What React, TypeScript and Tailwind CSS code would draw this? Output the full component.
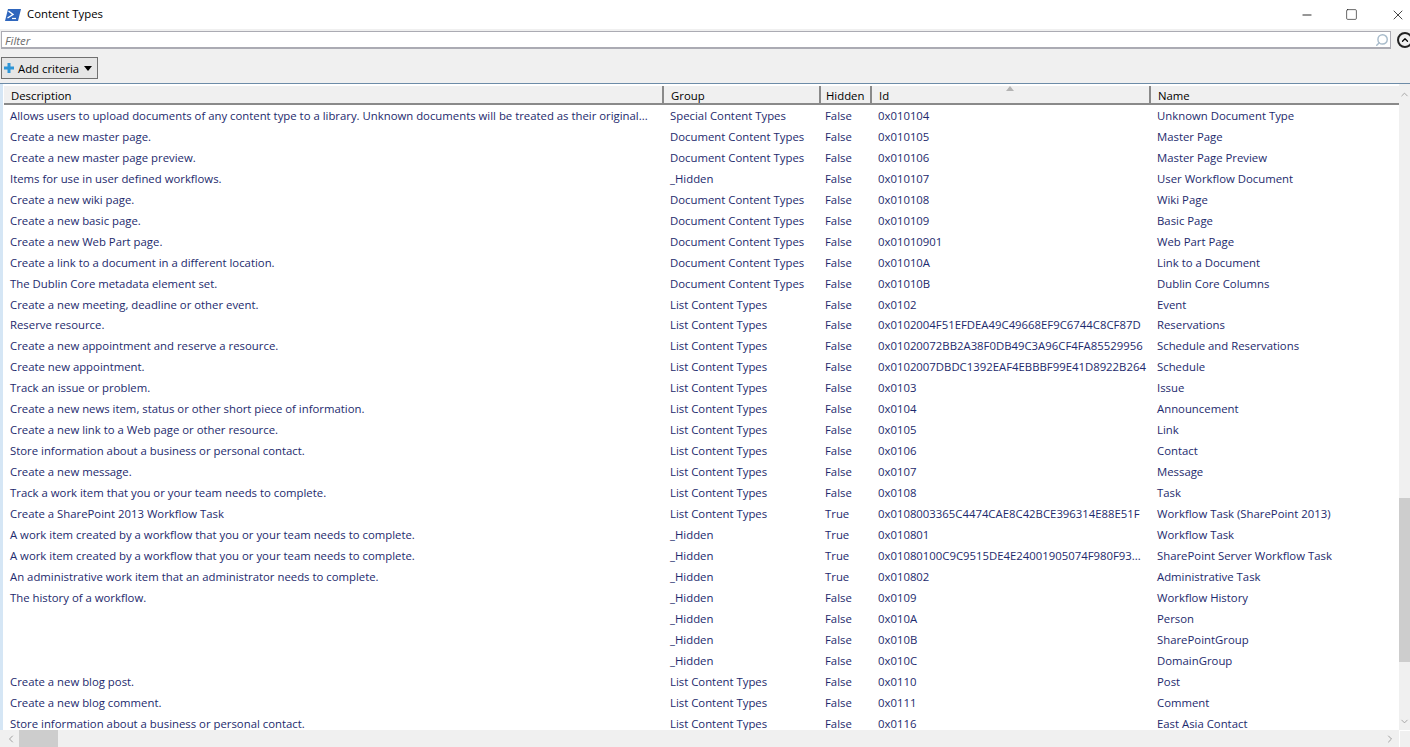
import { ChevronDown, ChevronLeft, ChevronRight, ChevronUp, Minus, Search, Square, X } from 'lucide-react';

type Row = [string, string, string, string, string];

const DOC = 'Document Content Types';
const LIST = 'List Content Types';
const HID = '_Hidden';

const ROWS: Row[] = [
  ['Allows users to upload documents of any content type to a library. Unknown documents will be treated as their original...', 'Special Content Types', 'False', '0x010104', 'Unknown Document Type'],
  ['Create a new master page.', DOC, 'False', '0x010105', 'Master Page'],
  ['Create a new master page preview.', DOC, 'False', '0x010106', 'Master Page Preview'],
  ['Items for use in user defined workflows.', HID, 'False', '0x010107', 'User Workflow Document'],
  ['Create a new wiki page.', DOC, 'False', '0x010108', 'Wiki Page'],
  ['Create a new basic page.', DOC, 'False', '0x010109', 'Basic Page'],
  ['Create a new Web Part page.', DOC, 'False', '0x01010901', 'Web Part Page'],
  ['Create a link to a document in a different location.', DOC, 'False', '0x01010A', 'Link to a Document'],
  ['The Dublin Core metadata element set.', DOC, 'False', '0x01010B', 'Dublin Core Columns'],
  ['Create a new meeting, deadline or other event.', LIST, 'False', '0x0102', 'Event'],
  ['Reserve resource.', LIST, 'False', '0x0102004F51EFDEA49C49668EF9C6744C8CF87D', 'Reservations'],
  ['Create a new appointment and reserve a resource.', LIST, 'False', '0x01020072BB2A38F0DB49C3A96CF4FA85529956', 'Schedule and Reservations'],
  ['Create new appointment.', LIST, 'False', '0x0102007DBDC1392EAF4EBBBF99E41D8922B264', 'Schedule'],
  ['Track an issue or problem.', LIST, 'False', '0x0103', 'Issue'],
  ['Create a new news item, status or other short piece of information.', LIST, 'False', '0x0104', 'Announcement'],
  ['Create a new link to a Web page or other resource.', LIST, 'False', '0x0105', 'Link'],
  ['Store information about a business or personal contact.', LIST, 'False', '0x0106', 'Contact'],
  ['Create a new message.', LIST, 'False', '0x0107', 'Message'],
  ['Track a work item that you or your team needs to complete.', LIST, 'False', '0x0108', 'Task'],
  ['Create a SharePoint 2013 Workflow Task', LIST, 'True', '0x0108003365C4474CAE8C42BCE396314E88E51F', 'Workflow Task (SharePoint 2013)'],
  ['A work item created by a workflow that you or your team needs to complete.', HID, 'True', '0x010801', 'Workflow Task'],
  ['A work item created by a workflow that you or your team needs to complete.', HID, 'True', '0x01080100C9C9515DE4E24001905074F980F93...', 'SharePoint Server Workflow Task'],
  ['An administrative work item that an administrator needs to complete.', HID, 'True', '0x010802', 'Administrative Task'],
  ['The history of a workflow.', HID, 'False', '0x0109', 'Workflow History'],
  ['', HID, 'False', '0x010A', 'Person'],
  ['', HID, 'False', '0x010B', 'SharePointGroup'],
  ['', HID, 'False', '0x010C', 'DomainGroup'],
  ['Create a new blog post.', LIST, 'False', '0x0110', 'Post'],
  ['Create a new blog comment.', LIST, 'False', '0x0111', 'Comment'],
  ['Store information about a business or personal contact.', LIST, 'False', '0x0116', 'East Asia Contact'],
];

const HEADERS = ['Description', 'Group', 'Hidden', 'Id', 'Name'];

function PowerShellIcon() {
  return (
    <svg width="16" height="12" viewBox="0 0 16 12" aria-hidden="true">
      <path d="M3 0h13l-3 12H0z" fill="#2f66bd" />
      <path d="M3.500 2 8 5.500 2.500 9" fill="none" stroke="#fff" strokeWidth="1.4" />
      <path d="M7 9.500h4" stroke="#fff" strokeWidth="1.200" />
    </svg>
  );
}

function PlusIcon() {
  return (
    <svg width="10" height="10" viewBox="0 0 10 10" aria-hidden="true">
      <path d="M3.500 0h3v3.500H10v3H6.500V10h-3V6.500H0v-3h3.500z" fill="#2f95d6" />
    </svg>
  );
}

export default function App() {
  return (
    <div className="flex h-[747px] w-[1410px] flex-col overflow-hidden bg-[#f0f0f0] font-['Open_Sans','Noto_Sans',sans-serif] text-[11.35px] text-black">
      <div className="flex h-[29px] shrink-0 items-center bg-white pl-[5px]">
        <PowerShellIcon />
        <span className="mb-px ml-[6px]">Content Types</span>
        <div className="ml-auto flex items-center">
          <Minus size={14} strokeWidth={1.4} className="mr-[31px]" />
          <Square size={13} strokeWidth={1.1} className="mr-[32px]" />
          <X size={16} strokeWidth={1.1} className="mr-[4px]" />
        </div>
      </div>

      <div className="mt-[2px] flex h-[18px] shrink-0 items-center pl-px">
        <div className="flex h-[18px] w-[1390px] shrink-0 items-center justify-between border border-b-2 border-[#ababb3] bg-white pl-[3px] pr-[1px]">
          <span className="pt-[3px] text-[11.5px] italic text-[#6d6d6d]">Filter</span>
          <Search size={14} strokeWidth={2.5} className="-scale-x-100 text-[#a9bccb]" />
        </div>
        <div className="ml-[6px] flex h-[16px] w-[16px] shrink-0 items-center justify-center rounded-full border-2 border-[#222]">
          <ChevronUp size={10} strokeWidth={3} />
        </div>
      </div>

      <div className="mt-[8px] shrink-0 pl-px">
        <div className="flex h-[22px] w-[97px] items-center whitespace-nowrap border border-[#707070] bg-[#e6e6e6] pl-[2px]">
          <PlusIcon />
          <span className="ml-[4px] pt-px">Add criteria</span>
          <span className="ml-[5px] h-0 w-0 border-x-[4px] border-t-[5px] border-x-transparent border-t-black" />
        </div>
      </div>

      <div className="mt-[4px] flex min-h-0 flex-1 flex-col border-t border-[#6d8ca8] bg-white">
        <div className="flex min-h-0 flex-1">
          <div className="flex min-w-0 flex-1 flex-col border-l-[3px] border-[#d5e6f5] pl-px">
            <div className="h-[2px] shrink-0 bg-white" />
            <div className="grid h-[19px] shrink-0 grid-cols-[660px_157px_51px_279px_1fr] border-b-2 border-[#8a8a8a] bg-[#f0f0f0]">
              {HEADERS.map((label, i) => (
                <div
                  key={label}
                  className={i === 4 ? 'relative flex items-center pl-[7px] pt-px' : i === 2 ? 'relative flex items-center border-r-2 border-[#8a8a8a] pl-[5px] pt-px' : 'relative flex items-center border-r-2 border-[#8a8a8a] pl-[7px] pt-px'}
                >
                  {label}
                  {label === 'Id' && (
                    <span className="absolute right-[135px] top-0 h-0 w-0 border-x-[4px] border-b-[5px] border-x-transparent border-b-[#b4b4b4]" />
                  )}
                </div>
              ))}
            </div>
            <div className="min-h-0 flex-1 overflow-hidden">
              <div className="-mt-[0.04px]">
                {ROWS.map((row) => (
                  <div key={row[3]} className="grid h-[20.96px] grid-cols-[660px_155px_53px_279px_1fr] items-center text-[#1d2a6d]">
                    {row.map((cell, i) => (
                      <div key={i} className="overflow-hidden whitespace-nowrap pl-[6px]">
                        {cell}
                      </div>
                    ))}
                  </div>
                ))}
              </div>
            </div>
          </div>
          <div className="flex w-[11px] shrink-0 flex-col bg-[#f0f0f0]">
            <div className="flex h-[20px] items-center justify-center">
              <ChevronUp size={11} className="text-[#a0a0a0]" />
            </div>
            <div className="mt-[394px] h-[164px] bg-[#cdcdcd]" />
            <div className="mt-auto flex h-[17px] items-center justify-center">
              <ChevronDown size={11} className="text-[#a0a0a0]" />
            </div>
          </div>
        </div>
        <div className="flex h-[17px] shrink-0 items-center bg-[#f0f0f0]">
          <ChevronLeft size={12} className="ml-[5px] text-[#a0a0a0]" />
          <div className="ml-[2px] h-[17px] w-[39px] bg-[#cdcdcd]" />
          <ChevronRight size={12} className="ml-auto mr-[3px] text-[#a0a0a0]" />
          <div className="h-[17px] w-[11px] border-l border-t border-white" />
        </div>
      </div>
    </div>
  );
}
